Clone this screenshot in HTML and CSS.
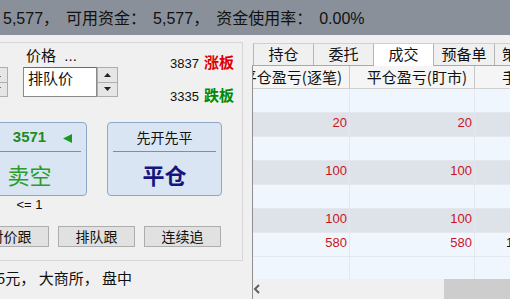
FILE: index.html
```html
<!DOCTYPE html>
<html lang="zh-CN">
<head>
    <meta charset="UTF-8">
    <title>下单面板</title>
    <link rel="stylesheet" href="styles.css">
</head>
<body>
    <div class="topbar">5,577<span class="punct">，</span>可用资金<span class="punct">：</span>5,577<span class="punct">，</span>资金使用率<span class="punct">：</span>0.00%</div>

    <div class="main">
        <div class="left">
            <div class="group">
                <div class="order-row">
                    <div class="spinbox qty">
                        <div class="spin-text"></div>
                        <div class="spin-btns">
                            <span><svg width="7" height="4" viewBox="0 0 7 4"><polygon points="3.5,0 7,4 0,4"/></svg></span>
                            <span><svg width="7" height="4" viewBox="0 0 7 4"><polygon points="0,0 7,0 3.5,4"/></svg></span>
                        </div>
                    </div>
                    <div class="price-col">
                        <div class="field-label">价格&nbsp;&nbsp;...</div>
                        <div class="spinbox">
                            <div class="spin-text">排队价</div>
                            <div class="spin-btns">
                                <span><svg width="7" height="4" viewBox="0 0 7 4"><polygon points="3.5,0 7,4 0,4"/></svg></span>
                                <span><svg width="7" height="4" viewBox="0 0 7 4"><polygon points="0,0 7,0 3.5,4"/></svg></span>
                            </div>
                        </div>
                    </div>
                    <div class="limits">
                        <div class="limit"><span class="limit-num">3837</span><span class="limit-tag up">涨板</span></div>
                        <div class="limit"><span class="limit-num">3335</span><span class="limit-tag down">跌板</span></div>
                    </div>
                </div>

                <div class="trade-row">
                    <div class="trade-btn sell">
                        <div class="trade-top price-top"><span class="last">3571</span><svg class="tri" width="9" height="9" viewBox="0 0 9 9"><polygon points="9,0 0,4.5 9,9"/></svg></div>
                        <div class="trade-sep"></div>
                        <div class="trade-main">卖空</div>
                    </div>
                    <div class="trade-btn close">
                        <div class="trade-top">先开先平</div>
                        <div class="trade-sep"></div>
                        <div class="trade-main">平仓</div>
                    </div>
                </div>

                <div class="hint">&lt;= 1</div>

                <div class="follow-row">
                    <button class="follow-btn">对价跟</button>
                    <button class="follow-btn">排队跟</button>
                    <button class="follow-btn">连续追</button>
                </div>
            </div>
            <div class="status">5元， 大商所， 盘中</div>
        </div>

        <div class="right">
            <div class="tabs">
                <div class="tab">持仓</div>
                <div class="tab">委托</div>
                <div class="tab active">成交</div>
                <div class="tab wide">预备单</div>
                <div class="tab">策略单</div>
            </div>
            <div class="grid-frame">
                <div class="grid-view">
                    <div class="grid">
                        <div class="hrow">
                            <div class="hcell">平仓盈亏(逐笔)</div>
                            <div class="hcell">平仓盈亏(盯市)</div>
                            <div class="hcell">手续费</div>
                        </div>
                        <div class="row light"><div class="cell"></div><div class="cell"></div><div class="cell"></div></div>
                        <div class="row dark"><div class="cell">20</div><div class="cell">20</div><div class="cell"></div></div>
                        <div class="row light"><div class="cell"></div><div class="cell"></div><div class="cell"></div></div>
                        <div class="row dark"><div class="cell">100</div><div class="cell">100</div><div class="cell"></div></div>
                        <div class="row light"><div class="cell"></div><div class="cell"></div><div class="cell"></div></div>
                        <div class="row dark"><div class="cell">100</div><div class="cell">100</div><div class="cell"></div></div>
                        <div class="row light"><div class="cell">580</div><div class="cell">580</div><div class="cell plain">1160.00</div></div>
                        <div class="row light"><div class="cell"></div><div class="cell"></div><div class="cell"></div></div>
                    </div>
                </div>
                <div class="hscroll">
                    <div class="scroll-arrow">
                        <svg width="8" height="10" viewBox="0 0 8 10"><polyline points="6,1 2,5 6,9" fill="none" stroke="#606060" stroke-width="2"/></svg>
                    </div>
                    <div class="scroll-track"><div class="scroll-thumb"></div></div>
                </div>
            </div>
        </div>
    </div>
</body>
</html>
```

FILE: styles.css
```css
* {
    box-sizing: border-box;
}

body {
    margin: 0;
    width: 510px;
    height: 299px;
    overflow: hidden;
    background-color: #f0f0f0;
    font-family: "Liberation Sans", "Noto Sans CJK SC", sans-serif;
    color: #111;
}

.topbar {
    height: 35px;
    background-color: #8a9099;
    padding: 5px 0 0 3px;
    font-size: 16px;
    line-height: 28px;
    white-space: nowrap;
    overflow: hidden;
}

.punct {
    margin-right: 7px;
}

.main {
    display: flex;
    height: 264px;
}

/* left: order panel */
.left {
    width: 252px;
    flex: none;
    overflow: hidden;
}

.group {
    margin: 7px 0 0 -28px;
    width: 271px;
    height: 219px;
    border: 1px solid #d6d6d6;
    border-left: none;
}

.order-row {
    display: flex;
    align-items: flex-start;
    height: 79px;
    padding-top: 3px;
}

.spinbox {
    display: flex;
    height: 30px;
}

.qty {
    width: 36px;
    margin-top: 21px;
}

.spin-text {
    flex: 1;
    background-color: #fff;
    border: 1px solid #8a8a8a;
    border-top-color: #6a6a6a;
    padding-left: 4px;
    font-family: "Noto Sans CJK SC", sans-serif;
    font-size: 15px;
    line-height: 19px;
}

.spin-btns {
    width: 21px;
    display: flex;
    flex-direction: column;
}

.spin-btns span {
    flex: 1;
    display: flex;
    align-items: center;
    justify-content: center;
    background-color: #e6e6e6;
    border: 1px solid #adadad;
}

.spin-btns span + span {
    border-top: none;
}

.spin-btns polygon {
    fill: #222;
}

.price-col {
    width: 95px;
    margin-left: 15px;
}

.field-label {
    height: 21px;
    padding-left: 3px;
    font-size: 15px;
    line-height: 19px;
    white-space: nowrap;
}

.limits {
    margin-left: 52px;
    padding-top: 6px;
    display: flex;
    flex-direction: column;
    gap: 11px;
}

.limit {
    line-height: 20px;
    white-space: nowrap;
}

.limit-num {
    font-size: 13px;
}

.limit-tag {
    margin-left: 5px;
    font-family: "Noto Sans CJK SC", sans-serif;
    font-size: 15px;
    font-weight: bold;
}

.limit-tag.up {
    color: #e00000;
}

.limit-tag.down {
    color: #008a00;
}

.trade-row {
    display: flex;
    gap: 20px;
    height: 74px;
}

.trade-btn {
    width: 115px;
    height: 74px;
    display: flex;
    flex-direction: column;
    background-color: #dae5f3;
    border: 1px solid #8ea7c8;
    border-radius: 4px;
}

.trade-top {
    height: 28px;
    line-height: 28px;
    text-align: center;
    font-family: "Noto Sans CJK SC", sans-serif;
    font-size: 14px;
}

.price-top {
    padding-left: 26px;
    font-family: "Liberation Sans", sans-serif;
    font-size: 15px;
    font-weight: bold;
    color: #1e8c1e;
}

.tri {
    margin-left: 17px;
    vertical-align: -1px;
    fill: #1a9a1a;
}

.trade-sep {
    height: 1px;
    margin: 0 5px;
    background-color: #8c8c8c;
}

.trade-main {
    flex: 1;
    display: flex;
    align-items: center;
    justify-content: center;
    font-family: "Noto Sans CJK SC", sans-serif;
    font-size: 22px;
}

.sell .trade-main {
    color: #2a9d2a;
}

.close .trade-main {
    color: #15157e;
    font-weight: bold;
}

.hint {
    width: 115px;
    text-align: center;
    font-size: 13px;
    line-height: 18px;
}

.follow-row {
    display: flex;
    gap: 9px;
    margin-top: 12px;
}

.follow-btn {
    width: 77px;
    height: 21px;
    padding: 0;
    background-color: #e1e1e1;
    border: 1px solid #adadad;
    font-family: "Noto Sans CJK SC", sans-serif;
    font-size: 14px;
    line-height: 19px;
    color: #111;
}

.status {
    margin: 7px 0 0 -3px;
    font-family: "Noto Sans CJK SC", sans-serif;
    font-size: 15px;
    line-height: 20px;
    white-space: nowrap;
}

/* right: trade list */
.right {
    flex: 1;
    min-width: 0;
    display: flex;
    flex-direction: column;
    overflow: hidden;
}

.tabs {
    display: flex;
    align-items: flex-start;
    height: 23px;
    margin-top: 8px;
    padding-left: 1px;
    border-bottom: 1px solid #a9a9a9;
}

.tab {
    flex: none;
    width: 60px;
    height: 22px;
    background-color: #f0f0f0;
    border-top: 1px solid #d0d0d0;
    border-right: 1px solid #b5b5b5;
    text-align: center;
    font-family: "Noto Sans CJK SC", sans-serif;
    font-size: 15px;
    line-height: 20px;
    white-space: nowrap;
}

.tab:first-child {
    width: 61px;
    border-left: 1px solid #b5b5b5;
}

.tab.wide {
    width: 61px;
}

.tab.active {
    height: 23px;
    background-color: #fff;
}

.grid-frame {
    flex: 1;
    display: flex;
    flex-direction: column;
    border-left: 1px solid #8f8f8f;
}

.grid-view {
    height: 213px;
    overflow: hidden;
}

.grid {
    width: max-content;
    margin-left: -28px;
}

.hrow,
.row {
    display: grid;
    grid-template-columns: 125px 125px 80px;
}

.hrow {
    height: 23px;
    background-color: #f5f5f5;
    border-bottom: 1px solid #d0d0d0;
}

.hcell {
    padding-right: 7px;
    border-right: 1px solid #c6c6c6;
    text-align: right;
    font-family: "Noto Sans CJK SC", sans-serif;
    font-size: 15px;
    line-height: 22px;
    white-space: nowrap;
}

.row {
    height: 24px;
    border-bottom: 1px solid #e4e8ee;
}

.row.light {
    background-color: #f0f6fd;
}

.row.dark {
    background-color: #dee3ea;
}

.cell {
    padding-right: 2px;
    border-right: 1px solid #e3e7ee;
    text-align: right;
    font-size: 13px;
    line-height: 20px;
    color: #c8141e;
}

.cell.plain {
    color: #111;
}

.hscroll {
    height: 20px;
    display: flex;
    background-color: #f0f0f0;
}

.scroll-arrow {
    width: 20px;
    display: flex;
    align-items: center;
    justify-content: center;
}

.scroll-track {
    flex: 1;
    padding-left: 183px;
}

.scroll-thumb {
    width: 100px;
    height: 20px;
    background-color: #cdcdcd;
}
```
